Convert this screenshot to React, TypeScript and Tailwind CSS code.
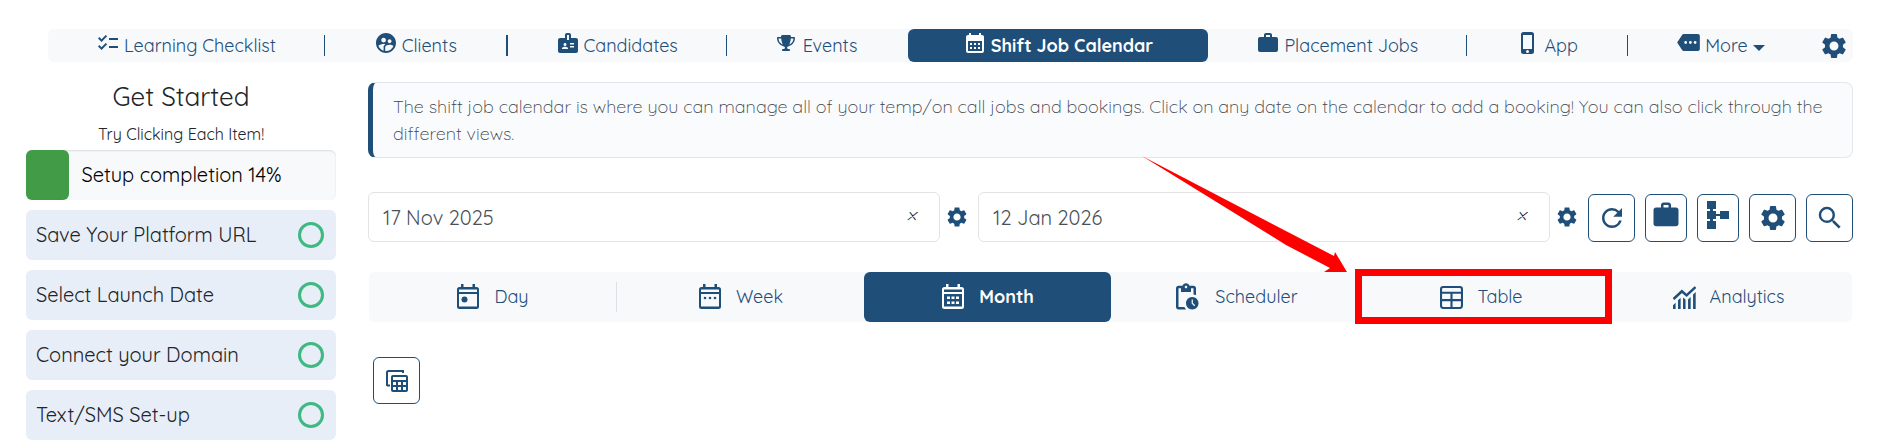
import type { ReactNode } from "react"
import { FaTrophy } from "react-icons/fa6"
import {
  MdBadge,
  MdCalendarMonth,
  MdChecklist,
  MdOutlinePendingActions,
  MdRefresh,
  MdSearch,
  MdSettings,
  MdSupervisedUserCircle,
  MdWork,
} from "react-icons/md"

type IconProps = { className?: string }

function Phone({ className }: IconProps) {
  return (
    <svg viewBox="0 0 24 24" fill="currentColor" className={className}>
      <path d="M15.500 1h-8A2.500 2.500 0 0 0 5 3.500v17A2.500 2.500 0 0 0 7.500 23h8a2.500 2.500 0 0 0 2.500-2.500v-17A2.500 2.500 0 0 0 15.500 1m-4 21a1.500 1.500 0 1 1 0-3 1.500 1.500 0 0 1 0 3m4.500-4H7V4h9v14Z" />
    </svg>
  )
}

function MoreTag({ className }: IconProps) {
  return (
    <svg viewBox="0 0 24 18" fill="currentColor" className={className}>
      <path d="M22 0H7c-.7 0-1.200.35-1.600.9L0 9l5.400 8.100c.4.500.9.900 1.600.900h15a2 2 0 0 0 2-2V2a2 2 0 0 0-2-2M9 10.500a1.500 1.500 0 1 1 0-3 1.500 1.500 0 0 1 0 3m5 0a1.500 1.500 0 1 1 0-3 1.500 1.500 0 0 1 0 3m5 0a1.500 1.500 0 1 1 0-3 1.500 1.500 0 0 1 0 3Z" />
    </svg>
  )
}

function Caret({ className }: IconProps) {
  return (
    <svg viewBox="0 0 12 6" fill="currentColor" className={className}>
      <path d="M0 0h12L6 6z" />
    </svg>
  )
}

function CalendarFrame({ className, children }: IconProps & { children: ReactNode }) {
  return (
    <svg viewBox="0 0 24 26" fill="currentColor" className={className}>
      <path
        fillRule="evenodd"
        d="M5 0h2.500v3h9V0H19v3h1.500A2.500 2.500 0 0 1 23 5.500v17a2.500 2.500 0 0 1-2.500 2.500h-17A2.500 2.500 0 0 1 1 22.500v-17A2.500 2.500 0 0 1 3.500 3H5V0ZM3 5.500V8h18V5.500H3ZM3 10v12.500h18V10H3Z"
      />
      {children}
    </svg>
  )
}

function CalendarDay({ className }: IconProps) {
  return (
    <CalendarFrame className={className}>
      <circle cx="8.500" cy="15.500" r="3" />
    </CalendarFrame>
  )
}

function CalendarWeek({ className }: IconProps) {
  return (
    <CalendarFrame className={className}>
      <circle cx="7" cy="14" r="1.300" />
      <circle cx="12" cy="14" r="1.300" />
      <circle cx="17" cy="14" r="1.300" />
    </CalendarFrame>
  )
}

function CalendarGrid({ className }: IconProps) {
  return (
    <CalendarFrame className={className}>
      <path d="M6 12.500h3v2.500H6zM10.500 12.500h3v2.500h-3zM15 12.500h3v2.500h-3zM6 17.500h3V20H6zM10.500 17.500h3V20h-3zM15 17.500h3V20h-3z" />
    </CalendarFrame>
  )
}

function TableIcon({ className }: IconProps) {
  return (
    <svg viewBox="0 0 22 22" fill="none" stroke="currentColor" strokeWidth="2" className={className}>
      <rect x="1" y="1" width="20" height="20" rx="2" />
      <path d="M1 6.500h20M1 13.500h20M11 6.500V21" />
    </svg>
  )
}

function ChartIcon({ className }: IconProps) {
  return (
    <svg viewBox="0 0 22 22" className={className}>
      <path d="M.5 12.500L8.500 5l4.500 4 8.500-8" fill="none" stroke="currentColor" strokeWidth="2.400" />
      <path
        d="M0 18.500L2.500 16v6H0zM4.800 13.700L7.300 11.200V22H4.800zM9.600 11l2.400 2V22H9.600zM14.400 13l2.500-2.500V22h-2.500zM19.200 8.200L21.700 5.700V22h-2.500z"
        fill="currentColor"
      />
    </svg>
  )
}

function Sitemap({ className }: IconProps) {
  return (
    <svg viewBox="0 0 22 28" fill="currentColor" className={className}>
      <path d="M0 0h9v8H6v2h3v3h4v-3h9v8h-9v-3H9v3H6v2h3v8H0v-8h3v-2H0v-8h3V8H0z" />
    </svg>
  )
}

function TableMultiple({ className }: IconProps) {
  return (
    <svg viewBox="0 0 22 22" className={className}>
      <path d="M1 16V2.500A1.500 1.500 0 0 1 2.500 1H17v2M1 15.500h3" fill="none" stroke="currentColor" strokeWidth="2" />
      <path
        fill="currentColor"
        fillRule="evenodd"
        d="M7 5h13a2 2 0 0 1 2 2v13a2 2 0 0 1-2 2H7a2 2 0 0 1-2-2V7a2 2 0 0 1 2-2Zm0 2v3h13V7H7Zm0 5v3h3v-3H7Zm5 0v3h3v-3h-3Zm5 0v3h3v-3h-3ZM7 17v3h3v-3H7Zm5 0v3h3v-3h-3Zm5 0v3h3v-3h-3Z"
      />
    </svg>
  )
}

function NavLink({ icon, label, className }: { icon: ReactNode; label: string; className: string }) {
  return (
    <a href="#" className={`flex h-[33px] basis-0 items-center justify-center gap-1 ${className}`}>
      <span className="-mt-1.5">{icon}</span>
      {label}
    </a>
  )
}

function Divider({ className = "w-px" }: IconProps) {
  return <span className={`h-[21px] bg-[#1f4e79] ${className}`} />
}

function MainNav() {
  return (
    <nav className="ml-12 mr-10 flex items-center rounded-md bg-[#f8f9fb] text-lg">
      <NavLink icon={<MdChecklist className="size-6" />} label="Learning Checklist" className="grow-[276]" />
      <Divider />
      <NavLink icon={<MdSupervisedUserCircle className="size-6" />} label="Clients" className="grow-[181]" />
      <Divider className="w-0.5" />
      <NavLink icon={<MdBadge className="size-6" />} label="Candidates" className="grow-[218]" />
      <Divider />
      <NavLink icon={<FaTrophy className="mr-1 size-[18px]" />} label="Events" className="grow-[181]" />
      <NavLink
        icon={<MdCalendarMonth className="size-6" />}
        label="Shift Job Calendar"
        className="grow-[301] rounded-md bg-[#1f4e79] font-bold text-white"
      />
      <NavLink icon={<MdWork className="size-6" />} label="Placement Jobs" className="grow-[258]" />
      <Divider />
      <NavLink icon={<Phone className="size-6" />} label="App" className="grow-[160]" />
      <Divider />
      <div className="grow-[225] basis-0">
        <div className="flex items-center justify-between pl-[49px] pr-1">
          <button className="flex items-center gap-[5px]">
            <MoreTag className="-mt-1.5 h-[17px] w-[23px]" />
            More
            <Caret className="mt-1 h-1.5 w-3" />
          </button>
          <button aria-label="Settings">
            <MdSettings className="size-[30px]" />
          </button>
        </div>
      </div>
    </nav>
  )
}

const steps = ["Save Your Platform URL", "Select Launch Date", "Connect your Domain", "Text/SMS Set-up"]

function Sidebar() {
  return (
    <aside className="w-[310px] shrink-0 text-xl text-[#212529]">
      <h2 className="text-center text-[26px] leading-[34px]">Get Started</h2>
      <p className="mt-2 pb-1 text-center text-base leading-6">Try Clicking Each Item!</p>
      <div className="flex h-[50px] items-center rounded-md bg-[#f8f9fb] text-black shadow-[inset_0_1px_2px_rgba(0,0,0,0.12)]">
        <span className="h-full w-[14%] rounded-md bg-[#429b46]" />
        <span className="ml-3">Setup completion 14%</span>
      </div>
      <ul className="mt-2.5 flex flex-col gap-2.5">
        {steps.map((step) => (
          <li key={step}>
            <button className="flex h-[50px] w-full items-center justify-between rounded-md bg-[#e8eef8] pl-2.5 pr-3">
              {step}
              <span className="size-[26px] rounded-full border-[3px] border-[#3eb982]" />
            </button>
          </li>
        ))}
      </ul>
    </aside>
  )
}

function DateField({ label, value }: { label: string; value: string }) {
  return (
    <div className="flex flex-1 items-center">
      <div className="flex h-[50px] flex-1 items-center rounded-md border border-[#e3e3e6] pl-3.5 pr-[23px]">
        <input
          aria-label={label}
          defaultValue={value}
          className="min-w-0 flex-1 pt-0.5 text-xl text-[#495057] outline-none"
        />
        <button aria-label={`Clear ${label}`} className="pb-1 text-2xl font-light italic leading-5 text-[#212529]">
          ×
        </button>
      </div>
      <button aria-label={`${label} settings`} className="ml-[5px] mr-1">
        <MdSettings className="size-6" />
      </button>
    </div>
  )
}

function ToolButton({ label, className, children }: { label: string; className: string; children: ReactNode }) {
  return (
    <button
      aria-label={label}
      className={`flex h-12 items-center justify-center rounded-md border border-[#1f4e79] ${className}`}
    >
      {children}
    </button>
  )
}

function Toolbar() {
  return (
    <div className="mt-[34px] flex items-end">
      <div className="flex flex-1 gap-[5px]">
        <DateField label="Start date" value="17 Nov 2025" />
        <DateField label="End date" value="12 Jan 2026" />
      </div>
      <div className="ml-[5px] flex gap-2.5">
        <ToolButton label="Refresh" className="w-[47px]">
          <MdRefresh className="size-[30px]" />
        </ToolButton>
        <ToolButton label="Jobs" className="w-[42px] pb-1.5">
          <MdWork className="size-[30px]" />
        </ToolButton>
        <ToolButton label="Structure" className="w-[42px] pb-1.5">
          <Sitemap className="h-7 w-[22px]" />
        </ToolButton>
        <ToolButton label="Settings" className="w-[47px]">
          <MdSettings className="size-[30px]" />
        </ToolButton>
        <ToolButton label="Search" className="w-[47px]">
          <MdSearch className="size-[30px]" />
        </ToolButton>
      </div>
    </div>
  )
}

function Tab({ icon, label, className = "" }: { icon: ReactNode; label: string; className?: string }) {
  return (
    <button className={`flex h-[50px] flex-1 items-center justify-center gap-3.5 rounded-md ${className}`}>
      {icon}
      {label}
    </button>
  )
}

function Arrow() {
  return (
    <svg viewBox="0 0 205 116" className="absolute -top-[120px] right-full mr-[15px] h-[116px] w-[205px]" fill="#ff0000">
      <path d="M0 0L192 100 193 96 205 116 182 116 188 112 144 89Z" />
    </svg>
  )
}

function ViewTabs() {
  return (
    <div className="mx-px mt-[30px] flex items-center rounded-md bg-[#f8f9fb] text-lg">
      <Tab icon={<CalendarDay className="h-[26px] w-6" />} label="Day" />
      <span className="h-[30px] w-px bg-[#dee2e6]" />
      <Tab icon={<CalendarWeek className="h-[26px] w-6" />} label="Week" />
      <Tab
        icon={<CalendarGrid className="h-[26px] w-6" />}
        label="Month"
        className="bg-[#1f4e79] font-bold text-white"
      />
      <Tab icon={<MdOutlinePendingActions className="size-[30px]" />} label="Scheduler" />
      <div className="relative flex flex-1">
        <Tab icon={<TableIcon className="size-[23px]" />} label="Table" />
        <div className="pointer-events-none absolute -bottom-0.5 -left-[3px] -right-[7px] -top-[3px] border-[7px] border-[#ff0000]">
          <Arrow />
        </div>
      </div>
      <Tab icon={<ChartIcon className="size-[23px]" />} label="Analytics" />
    </div>
  )
}

export default function App() {
  return (
    <div className="bg-white pb-1 pt-[29px] font-['Quicksand','Lato',sans-serif] text-[#1f4e79]">
      <MainNav />
      <div className="mt-[18px] flex gap-8 pl-[26px] pr-10">
        <Sidebar />
        <main className="min-w-0 flex-1 pt-0.5">
          <p className="rounded-lg border border-l-[5px] border-[#e3e6ea] border-l-[#1f4e79] bg-[#fafbfd] py-[10px] pl-5 pr-3 text-lg font-light leading-[27px] text-[#3c444c]">
            The shift job calendar is where you can manage all of your temp/on call jobs and bookings. Click on any date
            on the calendar to add a booking! You can also click through the different views.
          </p>
          <Toolbar />
          <ViewTabs />
          <button
            aria-label="Table layout"
            className="ml-[5px] mt-[35px] flex size-[47px] items-center justify-center rounded-md border border-[#1f4e79]"
          >
            <TableMultiple className="size-[22px]" />
          </button>
        </main>
      </div>
    </div>
  )
}
